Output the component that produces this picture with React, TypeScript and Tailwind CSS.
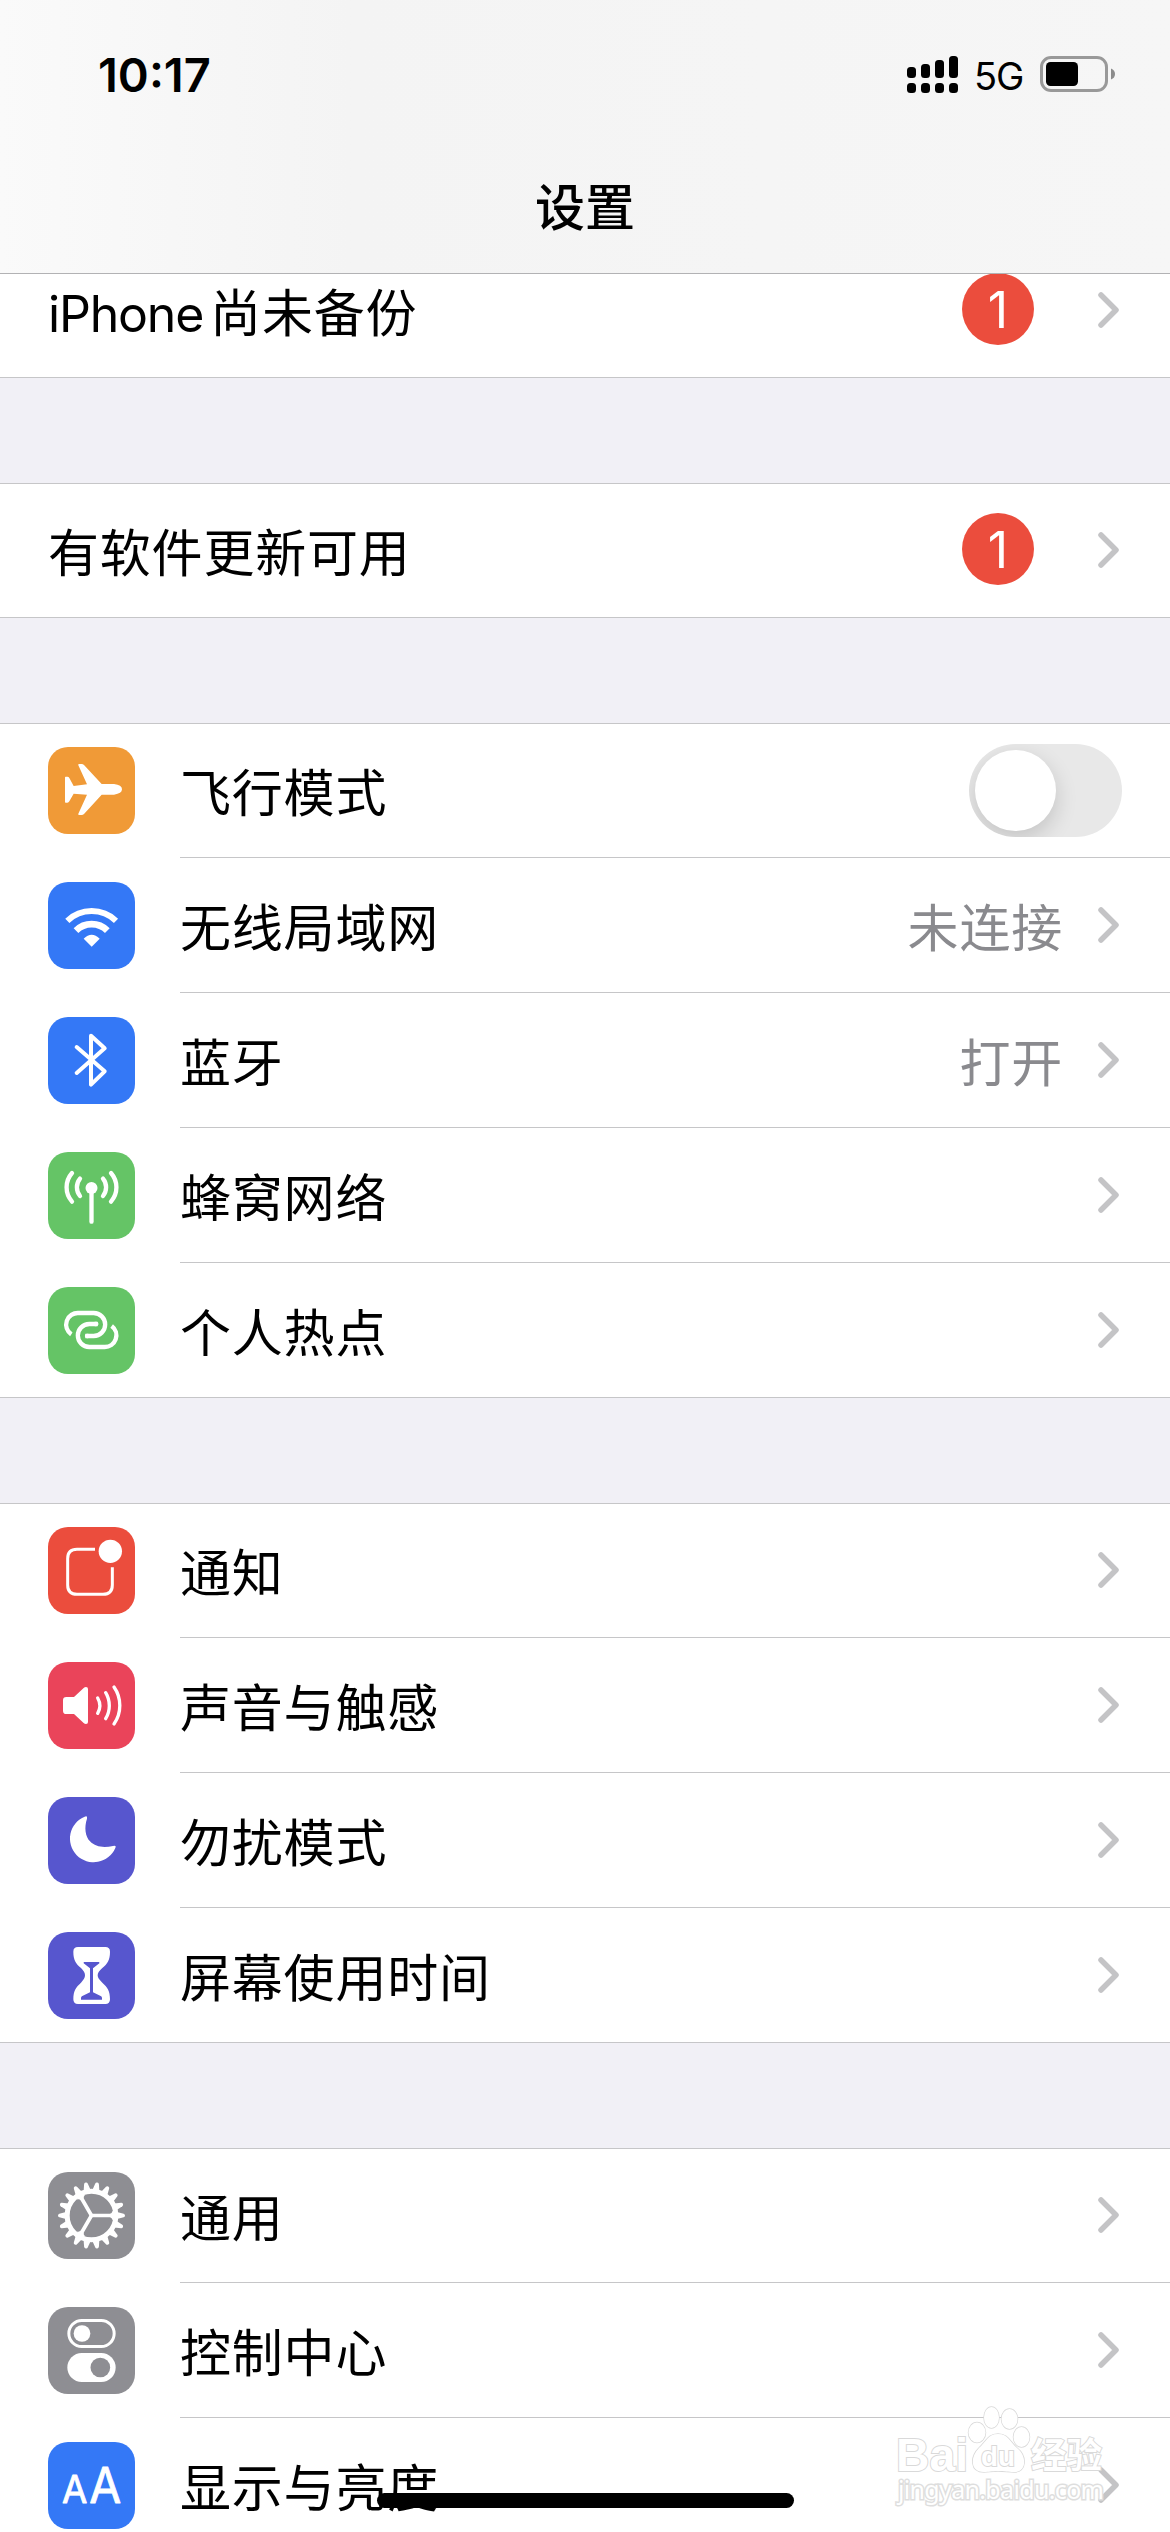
import React from 'react';

interface RowProps {
  label: string;
  latin?: string;
  icon?: React.ReactNode;
  value?: string;
  badge?: string;
  toggle?: boolean;
  first?: boolean;
  last?: boolean;
}

interface TileProps {
  color: string;
  children: React.ReactNode;
}

function Tile({ color, children }: TileProps) {
  return (
    <div className={`mt-6 mr-[45px] size-[87px] shrink-0 overflow-hidden rounded-[20px] ${color}`}>
      <svg viewBox="0 0 261 261" className="size-full" fill="none" strokeLinecap="round" strokeLinejoin="round">
        {children}
      </svg>
    </div>
  );
}

function AirplaneIcon() {
  return (
    <Tile color="bg-[#f09a37]">
      <path
        fill="#fff"
        d="M93 51h8q4 0 7 3l53 57h37q24 3 24 16t-24 16h-37l-53 58q-3 3-7 3h-8q-3 0-2-4l26-57-40-3-13 23q-2 4-6 4h-5q-2 0-2-3V92q0-3 2-3h5q4 0 6 4l13 24 40-5-26-57q-1-4 2-4z"
      />
    </Tile>
  );
}

function WifiIcon() {
  return (
    <Tile color="bg-[#3478f6]">
      <g stroke="#fff" strokeLinecap="butt">
        <path strokeWidth="18" d="M58 116.500A105.500 105.500 0 0 1 204 116.500" />
        <path strokeWidth="20" d="M84 146A66.500 66.500 0 0 1 178 146" />
      </g>
      <path fill="#fff" d="M107 170Q131 146 155 170L131 194z" />
    </Tile>
  );
}

function BluetoothIcon() {
  return (
    <Tile color="bg-[#3478f6]">
      <path stroke="#fff" strokeWidth="12" d="M86 90L170 163L129 203V56L170 94L86 168" />
    </Tile>
  );
}

function CellularIcon() {
  return (
    <Tile color="bg-[#65c466]">
      <circle cx="130.500" cy="108" r="18" fill="#fff" />
      <g stroke="#fff" strokeWidth="13">
        <path d="M130.500 110V209" />
        <path d="M96 80A41 41 0 0 0 96 132M165 80A41 41 0 0 1 165 132" />
        <path d="M72 63A65 65 0 0 0 72 149M189 63A65 65 0 0 1 189 149" />
      </g>
    </Tile>
  );
}

function HotspotIcon() {
  return (
    <Tile color="bg-[#65c466]">
      <g stroke="#fff" strokeWidth="13" strokeLinecap="butt">
        <path d="M70 142A35 35 0 0 1 92 78H137A34.500 34.500 0 0 1 137 147H112" />
        <path d="M191 117A35 35 0 0 1 169 180H124A34.500 34.500 0 0 1 124 111H149" />
      </g>
      <path stroke="#fff" strokeWidth="13" d="M117 147H120M141 111H145" />
    </Tile>
  );
}

function NotificationIcon() {
  return (
    <Tile color="bg-[#eb4d3d]">
      <path
        stroke="#fff"
        strokeWidth="9"
        strokeLinecap="butt"
        d="M141 67H87Q59 67 59 95V174Q59 202 87 202H165Q193 202 193 174V121"
      />
      <circle cx="187" cy="73" r="35" fill="#fff" />
    </Tile>
  );
}

function SoundIcon() {
  return (
    <Tile color="bg-[#ea445a]">
      <path
        fill="#fff"
        d="M55 105H78L107 78Q110 75 114 75Q120 75 120 81V180Q120 186 114 186Q110 186 107 183L78 156H55Q45 156 45 146V115Q45 105 55 105z"
      />
      <g stroke="#fff" strokeWidth="10">
        <path d="M149 108A46 46 0 0 1 149 154" />
        <path d="M173 92A75 75 0 0 1 173 170" />
        <path d="M198 75A97 97 0 0 1 198 186" />
      </g>
    </Tile>
  );
}

function MoonIcon() {
  return (
    <Tile color="bg-[#5756ce]">
      <path
        fill="#fff"
        d="M110 59Q119 55 117 65C108 92 112 118 126 133C143 151 168 153 195 147Q206 144 202 153A71 71 0 1 1 110 59z"
      />
    </Tile>
  );
}

function HourglassIcon() {
  return (
    <Tile color="bg-[#5756ce]">
      <path
        fill="#fff"
        d="M90 45H172Q186 45 186 59C186 85 178 95 163 108Q149 120 149 130T163 152C178 166 186 176 186 202Q186 216 172 216H90Q76 216 76 202C76 176 84 166 99 152Q111 140 111 130T99 108C84 95 76 85 76 59Q76 45 90 45z"
      />
      <path
        fill="#5756ce"
        d="M109 90H152Q155 90 154 94L135 109V181L158 192Q162 194 162 198V203H99V198Q99 194 103 192L126 181V109L107 94Q106 90 109 90z"
      />
    </Tile>
  );
}

function GearIcon() {
  return (
    <Tile color="bg-[#8e8e93]">
      <circle cx="130.500" cy="130.500" r="73" stroke="#fff" strokeWidth="15" />
      {Array.from({ length: 18 }, (_, i) => (
        <path
          key={i}
          fill="#fff"
          transform={`rotate(${i * 20} 130.500 130.500)`}
          d="M207 120L227 125Q231 126 231 130.500T227 136L207 141z"
        />
      ))}
      {[0, 120, 240].map((angle) => (
        <path
          key={angle}
          fill="#fff"
          transform={`rotate(${angle} 130.500 130.500)`}
          d="M128 125H186Q192 124 194 116L202 130.500L194 145Q192 137 186 136H128z"
        />
      ))}
    </Tile>
  );
}

function ControlIcon() {
  return (
    <Tile color="bg-[#8e8e93]">
      <rect x="62.500" y="40.500" width="136" height="78" rx="39" stroke="#fff" strokeWidth="9" />
      <circle cx="102" cy="79.500" r="25" fill="#fff" />
      <rect x="58" y="138" width="145" height="87" rx="43.500" fill="#fff" />
      <circle cx="157" cy="181.500" r="29.500" fill="#8e8e93" />
    </Tile>
  );
}

function DisplayIcon() {
  return (
    <Tile color="bg-[#3478f6]">
      <g fill="#fff" stroke="#fff" strokeWidth="2.500" fontFamily="Inter, sans-serif">
        <text x="42" y="183" fontSize="116" textLength="76" lengthAdjust="spacingAndGlyphs">
          A
        </text>
        <text x="124" y="183" fontSize="149" textLength="96" lengthAdjust="spacingAndGlyphs">
          A
        </text>
      </g>
    </Tile>
  );
}

function Chevron() {
  return (
    <svg viewBox="0 0 21 36" className="mt-[49px] h-9 w-[21px] shrink-0" fill="none">
      <path d="M3 3L18 18L3 33" stroke="#c4c4c6" strokeWidth="5.500" strokeLinecap="round" strokeLinejoin="round" />
    </svg>
  );
}

function Row({ label, latin, icon, value, badge, toggle, first, last }: RowProps) {
  return (
    <div className={`flex h-[135px] pl-12 ${first ? '-mt-px' : ''} ${last ? 'border-b border-[#c6c6c8]' : ''}`}>
      {icon}
      <div className={`flex flex-1 items-start ${last ? '' : 'border-b border-[#c6c6c8]'}`}>
        <span className="mt-[33px] flex-1 text-[51px] leading-[76px] tracking-[0.8px] whitespace-nowrap">
          {latin && <span className="mr-[7px] text-[50px] tracking-[-1.2px]">{latin}</span>}
          {label}
        </span>
        {value && (
          <span className="mt-[33px] mr-[35px] text-[51px] leading-[76px] tracking-[0.8px] text-[#8a8a8e]">
            {value}
          </span>
        )}
        {badge && (
          <span className="mt-[30px] mr-16 size-[72px] rounded-full bg-[#eb4d3d] text-center text-[50px] leading-[74px] text-white">
            {badge}
          </span>
        )}
        {toggle ? (
          <div className="mt-[21px] mr-12 h-[93px] w-[153px] overflow-hidden rounded-full bg-[#e8e8e8] p-1.5">
            <div className="size-[81px] rounded-full bg-white shadow-[0_8px_22px_rgba(0,0,0,0.16)]" />
          </div>
        ) : (
          <div className="mr-[51px]">
            <Chevron />
          </div>
        )}
      </div>
    </div>
  );
}

function StatusIcons() {
  return (
    <div className="flex items-start pr-[54px]">
      <svg viewBox="0 0 52 38" className="mt-[56px] h-[38px] w-[52px]" fill="#000">
        <rect x="0" y="11" width="9" height="11" rx="3.500" />
        <rect x="14" y="8" width="9" height="14" rx="3.500" />
        <rect x="28" y="4" width="9" height="18" rx="3.500" />
        <rect x="42" y="0" width="9" height="22" rx="3.500" />
        <rect x="0" y="27" width="9" height="10" rx="3.500" />
        <rect x="14" y="27" width="9" height="10" rx="3.500" />
        <rect x="28" y="27" width="9" height="10" rx="3.500" />
        <rect x="42" y="27" width="9" height="10" rx="3.500" />
      </svg>
      <span className="mt-[52px] ml-[15px] w-[50px] text-[38px] leading-[48px] tracking-[-1px]">5G</span>
      <svg viewBox="0 0 76 36" className="mt-[56px] ml-4 h-9 w-[76px]" fill="none">
        <rect x="1.500" y="1.500" width="65" height="33" rx="9.500" stroke="#999" strokeWidth="3" />
        <rect x="6" y="6" width="32" height="24" rx="4.500" fill="#000" />
        <path d="M71 12.500Q75 14 75 18T71 23.500z" fill="#8c8c8c" />
      </svg>
    </div>
  );
}

function Watermark() {
  return (
    <svg
      viewBox="0 0 310 152"
      className="absolute bottom-0 left-[860px] h-[152px] w-[310px]"
      fill="#fff"
      stroke="#d9d9d9"
      strokeWidth="1.500"
      paintOrder="stroke"
      fontFamily='"Liberation Sans", "Noto Sans CJK SC", sans-serif'
    >
      <ellipse cx="117" cy="52.500" rx="8.500" ry="10" />
      <ellipse cx="131.500" cy="37.500" rx="7.500" ry="10.500" />
      <ellipse cx="149.500" cy="39" rx="8" ry="10" />
      <ellipse cx="161.500" cy="57" rx="8" ry="10" />
      <path d="M138 54C148 54 150 62 157 68C167 76 167 92 154 92C148 92 145 91 138 91S129 92 124 92C110 92 110 77 119 68C126 62 128 54 138 54z" />
      <g strokeWidth="2" fontWeight="bold">
        <text x="36" y="91" fontSize="46" textLength="72" lengthAdjust="spacingAndGlyphs">
          Bai
        </text>
        <text x="121" y="86" fontSize="28" textLength="34" lengthAdjust="spacingAndGlyphs">
          du
        </text>
        <text x="171" y="88" fontSize="35" textLength="71" lengthAdjust="spacingAndGlyphs">
          经验
        </text>
      </g>
      <text
        x="38"
        y="119"
        fontSize="25"
        strokeWidth="3"
        stroke="#dedede"
        textLength="206"
        fontFamily='"Noto Sans", sans-serif'
      >
        jingyan.baidu.com
      </text>
    </svg>
  );
}

const groups: RowProps[][] = [
  [{ latin: 'iPhone', label: '尚未备份', badge: '1' }],
  [{ label: '有软件更新可用', badge: '1' }],
  [
    { label: '飞行模式', icon: <AirplaneIcon />, toggle: true },
    { label: '无线局域网', icon: <WifiIcon />, value: '未连接' },
    { label: '蓝牙', icon: <BluetoothIcon />, value: '打开' },
    { label: '蜂窝网络', icon: <CellularIcon /> },
    { label: '个人热点', icon: <HotspotIcon /> },
  ],
  [
    { label: '通知', icon: <NotificationIcon /> },
    { label: '声音与触感', icon: <SoundIcon /> },
    { label: '勿扰模式', icon: <MoonIcon /> },
    { label: '屏幕使用时间', icon: <HourglassIcon /> },
  ],
  [
    { label: '通用', icon: <GearIcon /> },
    { label: '控制中心', icon: <ControlIcon /> },
    { label: '显示与亮度', icon: <DisplayIcon /> },
  ],
];

export default function App() {
  return (
    <div className="relative h-[2532px] w-[1170px] overflow-hidden bg-[#f1f0f6] font-[Inter,'Noto_Sans_CJK_SC',sans-serif] text-black">
      <header className="relative z-10 h-[274px] border-b border-[#b2b2b4] bg-linear-to-r from-[#fafafa] via-[#f4f4f4] via-30% to-[#f6f6f6]">
        <div className="flex h-[150px] justify-between">
          <span className="mt-[46px] ml-[98px] text-[47px] leading-[58px] font-semibold">10:17</span>
          <StatusIcons />
        </div>
        <h1 className="mt-[21px] text-center text-[50px] leading-[74px] font-medium">设置</h1>
      </header>

      <main className="-mt-[31px] flex flex-col gap-[105px]">
        {groups.map((rows, g) => (
          <section key={g} className="border-t border-[#c6c6c8] bg-white">
            {rows.map((row, i) => (
              <Row key={row.label} {...row} first={i === 0} last={i === rows.length - 1} />
            ))}
          </section>
        ))}
      </main>

      <Watermark />
      <div className="absolute bottom-6 left-[377px] h-[15px] w-[417px] rounded-full bg-black" />
    </div>
  );
}
